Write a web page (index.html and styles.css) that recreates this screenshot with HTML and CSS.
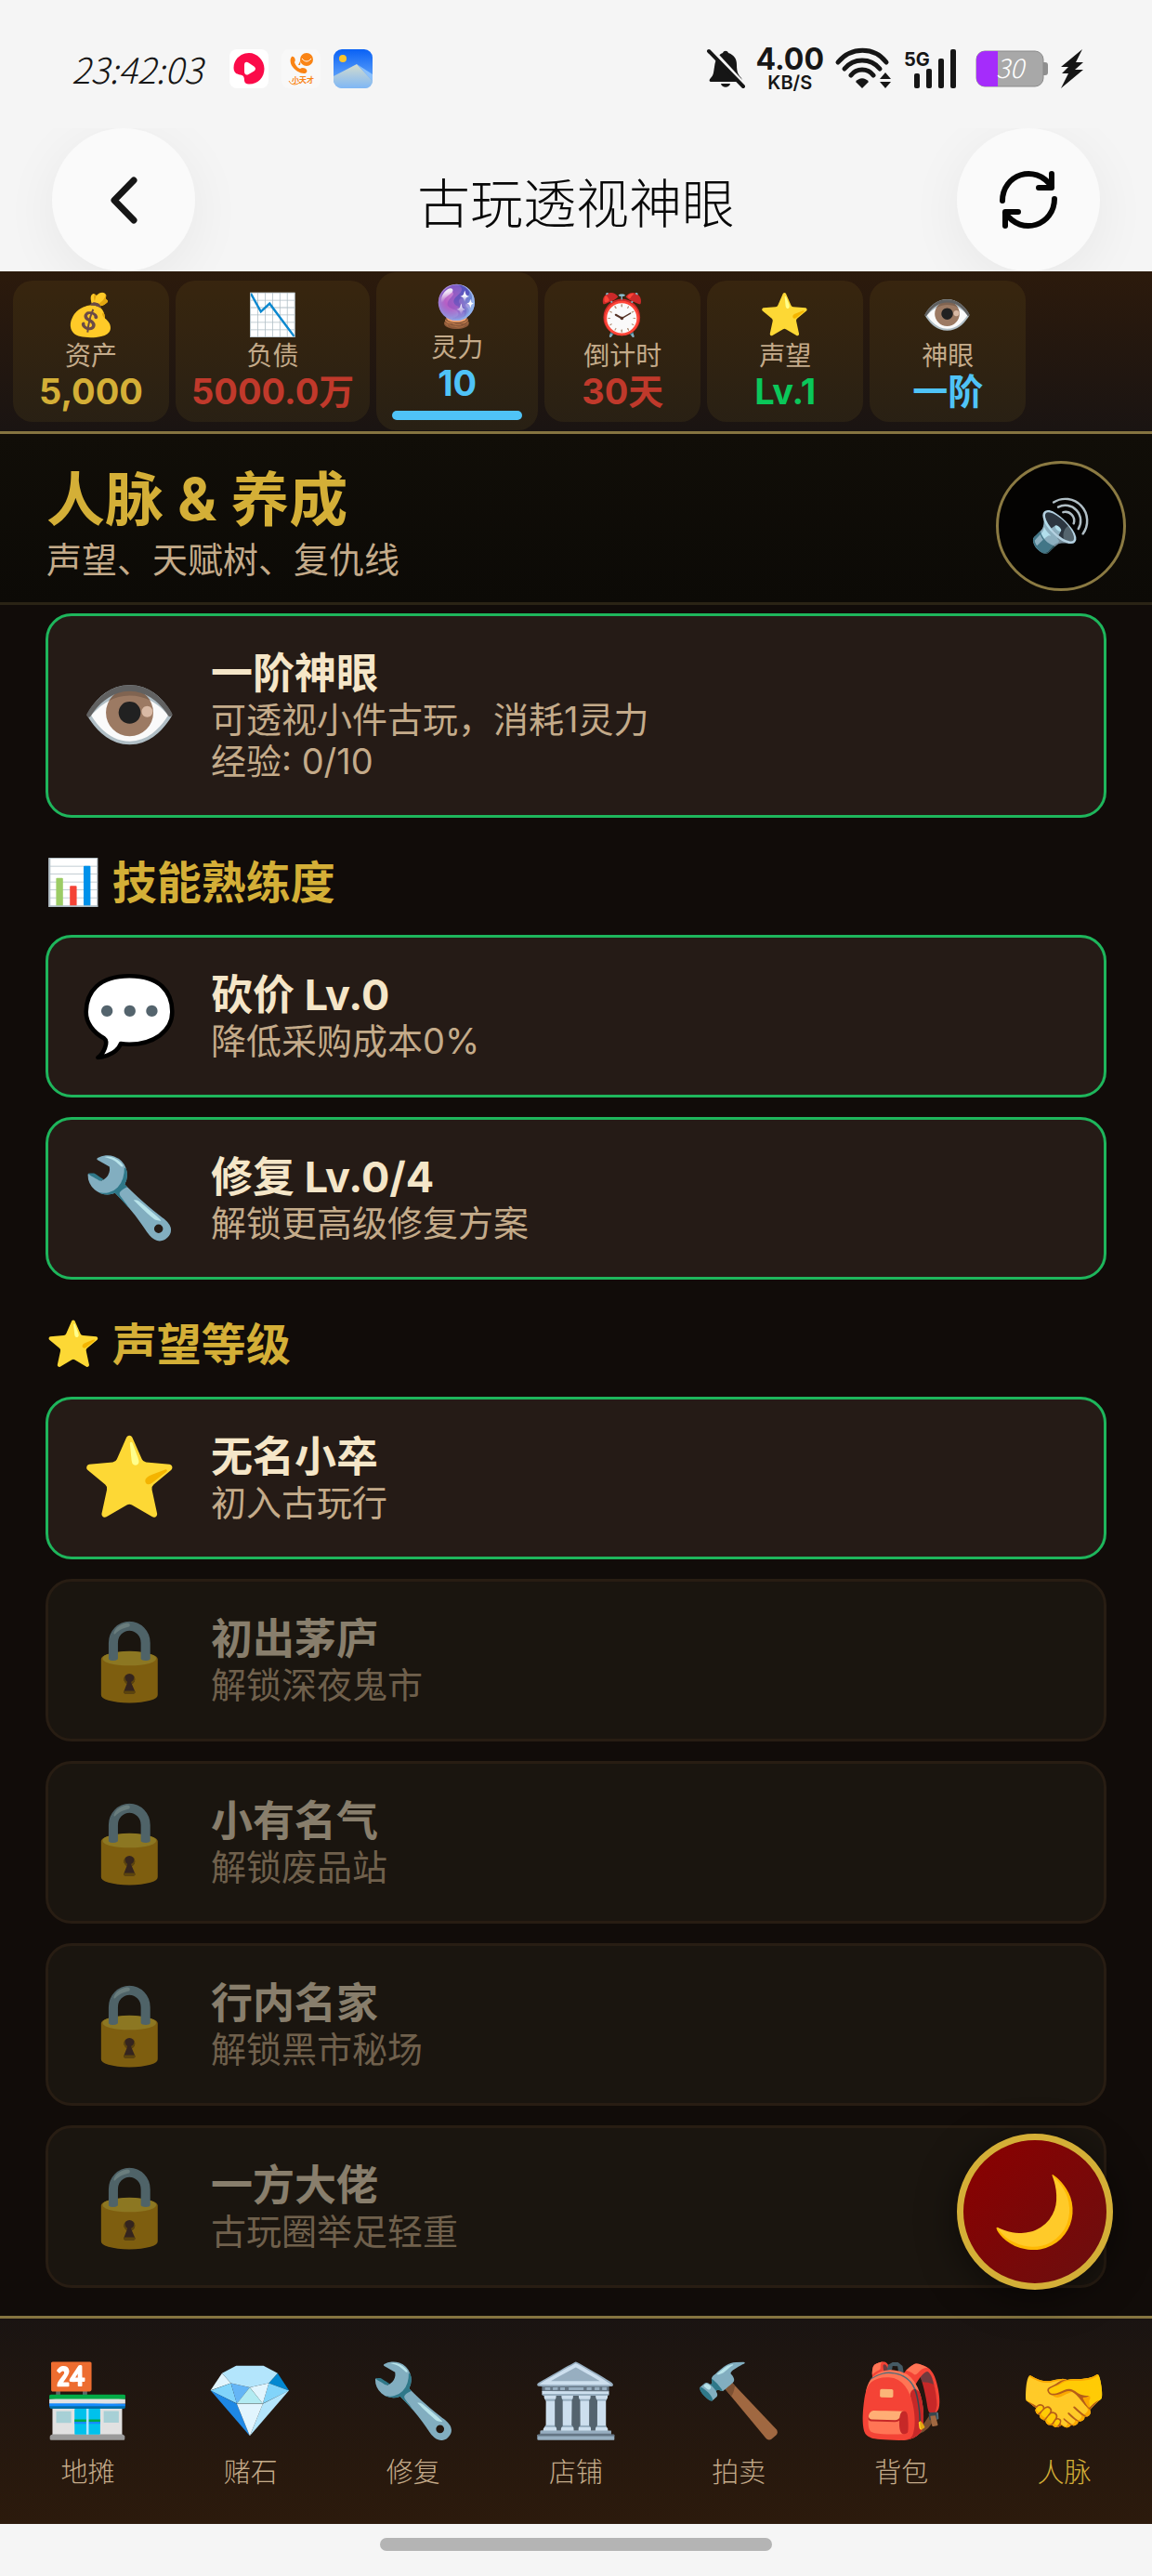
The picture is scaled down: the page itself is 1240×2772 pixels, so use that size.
FILE: index.html
```html
<!DOCTYPE html>
<html lang="zh-CN">
<head>
<meta charset="utf-8">
<meta name="viewport" content="width=device-width, initial-scale=1">
<title>古玩透视神眼</title>
<link rel="stylesheet" href="styles.css">
</head>
<body>
<div class="app">
  <div class="status">
    <div class="status-side">
      <time class="clock">23:42:03</time>
      <svg class="app-icon" viewBox="0 0 42 42"><rect width="42" height="42" rx="8" fill="#fff"/><path d="M21 4C12 4 4.500 11 4.500 20c0 5 3 7 7 7.500 4 .5 4.500 3 4.500 6 0 2.500 2 4 5 4C31 37.500 37.500 30 37.500 21S30 4 21 4z" fill="#fb0b49"/><path d="M16 17c0-3 2-4 4.500-2.500l6 4c2 1.500 2 3.500 0 5l-6 3.500c-2.500 1.500-4.500 0-4.500-3z" fill="#fff"/></svg>
      <svg class="app-icon" viewBox="0 0 42 42"><rect width="42" height="42" rx="8" fill="#f8f8f8"/><circle cx="27" cy="11" r="7" fill="#fa8415"/><path d="M20 17l-2 0 3-6z" fill="#fa8415"/><path d="M22 10c3 4 7 4 10 0" fill="none" stroke="#fff" stroke-width="1"/><path d="M11 8c-2 2-2 7 1 11s8 7 12 7c3 0 4-2 3-4s-5-3-7-1c-3-1-5-4-6-7 2-2 0-7-3-6z" fill="#fa8415"/><text x="11" y="36" class="tiny-label">小天才</text><path d="M8 34c2 5 9 5 12 1" fill="none" stroke="#fa8415" stroke-width="1"/></svg>
      <svg class="app-icon" viewBox="0 0 42 42"><defs><linearGradient id="sky" x2="0" y2="1"><stop stop-color="#0961f5"/><stop offset="1" stop-color="#7db9fb"/></linearGradient><linearGradient id="hill" x2="0" y2="1"><stop stop-color="#d4dccd"/><stop offset="1" stop-color="#7fb7f5"/></linearGradient></defs><rect width="42" height="42" rx="9" fill="url(#sky)"/><path d="M0 29L25 16l17 18v0a8 8 0 0 1-8 8H9a9 9 0 0 1-9-9z" fill="url(#hill)"/><path d="M25 16l17 18v-7z" fill="#8bc0fb"/><circle cx="10" cy="10" r="4" fill="#fbc52c"/></svg>
    </div>
    <div class="status-side">
      <svg class="bell" viewBox="0 0 41 42"><path d="M5 35c-3 0-3-2-1-4 3-3 3-6 4-12C9 10 12 6 17 4c1-3 5-3 6 0 6 2 9 6 9 13 0 8 2 11 5 14 1 2 1 4-1 4z" fill="#161616"/><path d="M15 37h10c-1 5-9 5-10 0z" fill="#161616"/><path d="M5 0l36 39" stroke="#f5f5f5" stroke-width="4"/><path d="M2 2l37 38" stroke="#161616" stroke-width="4" stroke-linecap="round"/></svg>
      <div class="rate"><span class="rate-num">4.00</span><span class="rate-unit">KB/S</span></div>
      <svg class="wifi" viewBox="0 0 60 44"><g fill="none" stroke="#161616" stroke-width="5" stroke-linecap="round"><path d="M3 15C17-2 42-2 55 15"/><path d="M10 22c10-12 28-12 38 0"/><path d="M17 29c6-8 18-8 24 0"/></g><path d="M22 36c4-5 10-5 14 0l-7 7z" fill="#161616"/><path d="M54 26l6 7H48zM54 43l6-7H48z" fill="#161616"/></svg>
      <svg class="signal" viewBox="0 0 57 44"><text x="0" y="19" class="net-label">5G</text><g fill="#161616"><rect x="11" y="27" width="6" height="16" rx="2"/><rect x="24" y="22" width="6" height="21" rx="2"/><rect x="37" y="11" width="6" height="32" rx="2"/><rect x="50" y="1" width="6" height="42" rx="2"/></g></svg>
      <svg class="battery" viewBox="0 0 78 40"><path d="M73 13h2q3 0 3 3v8q0 3-3 3h-2z" fill="#8f8f8f"/><rect x="1" y="1" width="72" height="38" rx="9" fill="#a8a8a8" stroke="#8a8a8a"/><path d="M24 1H10a9 9 0 0 0-9 9v20a9 9 0 0 0 9 9h14z" fill="#a52cfb"/><text x="37" y="30" class="battery-label">30</text></svg>
      <svg class="bolt" viewBox="0 0 24 42"><path d="M23 0L0 19h8L1 26h7L0 42l24-20h-9l9-8h-8z" fill="#161616"/></svg>
    </div>
  </div>
  <header class="topbar">
    <button class="round-btn" aria-label="返回"><svg viewBox="0 0 154 154"><path d="M88 56L67 77.500 88 99" fill="none" stroke="#161616" stroke-width="7" stroke-linecap="round" stroke-linejoin="round"/></svg></button>
    <h1>古玩透视神眼</h1>
    <button class="round-btn" aria-label="刷新"><svg viewBox="0 0 154 154"><g fill="none" stroke="#050505" stroke-width="6" stroke-linecap="round" stroke-linejoin="round"><path d="M49 78C49 50 84 37 102 63M102 49v15H88"/><path d="M105 76C105 104 70 117 52 91M52 105V90h14"/></g></svg></button>
  </header>

  <section class="stats">
    <div class="stat"><span class="emoji">💰</span><span class="label">资产</span><strong class="gold">5,000</strong></div>
    <div class="stat"><span class="emoji">📉</span><span class="label">负债</span><strong class="red">5000.0万</strong></div>
    <div class="stat"><span class="emoji">🔮</span><span class="label">灵力</span><strong class="blue">10</strong><span class="meter"></span></div>
    <div class="stat"><span class="emoji">⏰</span><span class="label">倒计时</span><strong class="red">30天</strong></div>
    <div class="stat"><span class="emoji">⭐</span><span class="label">声望</span><strong class="green">Lv.1</strong></div>
    <div class="stat"><span class="emoji">👁️</span><span class="label">神眼</span><strong class="blue">一阶</strong></div>
  </section>

  <div class="page-head">
    <div>
      <h2>人脉 &amp; 养成</h2>
      <p>声望、天赋树、复仇线</p>
    </div>
    <button class="sound" aria-label="声音"><span class="emoji">🔊</span></button>
  </div>

  <main class="content">
    <article class="card active"><span class="emoji">👁️</span><div><h4>一阶神眼</h4><p>可透视小件古玩，消耗1灵力</p><p>经验: 0/10</p></div></article>

    <h3><span class="emoji">📊</span>技能熟练度</h3>
    <div class="cards">
      <article class="card active"><span class="emoji">💬</span><div><h4>砍价 Lv.0</h4><p>降低采购成本0%</p></div></article>
      <article class="card active"><span class="emoji">🔧</span><div><h4>修复 Lv.0/4</h4><p>解锁更高级修复方案</p></div></article>
    </div>

    <h3><span class="emoji">⭐</span>声望等级</h3>
    <div class="cards">
      <article class="card active"><span class="emoji">⭐</span><div><h4>无名小卒</h4><p>初入古玩行</p></div></article>
      <article class="card locked"><span class="emoji">🔒</span><div><h4>初出茅庐</h4><p>解锁深夜鬼市</p></div></article>
      <article class="card locked"><span class="emoji">🔒</span><div><h4>小有名气</h4><p>解锁废品站</p></div></article>
      <article class="card locked"><span class="emoji">🔒</span><div><h4>行内名家</h4><p>解锁黑市秘场</p></div></article>
      <article class="card locked"><span class="emoji">🔒</span><div><h4>一方大佬</h4><p>古玩圈举足轻重</p></div></article>
    </div>
    <button class="fab" aria-label="夜晚"><span class="emoji">🌙</span></button>
  </main>

  <nav class="tabs">
    <a href="#stall"><span class="emoji">🏪</span>地摊</a>
    <a href="#stone"><span class="emoji">💎</span>赌石</a>
    <a href="#repair"><span class="emoji">🔧</span>修复</a>
    <a href="#shop"><span class="emoji">🏛️</span>店铺</a>
    <a href="#auction"><span class="emoji">🔨</span>拍卖</a>
    <a href="#bag"><span class="emoji">🎒</span>背包</a>
    <a href="#people" class="current"><span class="emoji">🤝</span>人脉</a>
  </nav>
  <div class="gesture"><span></span></div>
</div>
</body>
</html>
```
FILE: styles.css
```css
* { box-sizing: border-box; margin: 0; padding: 0; }

body {
  background: #f5f5f5;
  font-family: Inter, "Noto Sans CJK SC", sans-serif;
  color: #c4ab8a;
}

button { font: inherit; border: 0; cursor: pointer; }
svg { display: block; overflow: visible; }

.app { display: flex; flex-direction: column; min-height: 100vh; }

.emoji {
  font-family: "Noto Color Emoji", sans-serif;
  font-weight: 400;
  line-height: 1;
  white-space: nowrap;
}

/* system status bar */
.status {
  display: flex;
  justify-content: space-between;
  align-items: center;
  height: 138px;
  padding: 10px 74px 0 77px;
}
.status-side { display: flex; align-items: center; gap: 14px; }
.clock {
  width: 156px;
  font-family: "Noto Sans CJK SC", sans-serif;
  font-weight: 300;
  font-style: italic;
  font-size: 38px;
  line-height: 48px;
  color: #161616;
}
.app-icon { width: 42px; height: 42px; }
.tiny-label { font-size: 8px; font-weight: 700; fill: #fa8415; }
.bell { width: 41px; height: 42px; }
.rate {
  display: flex;
  flex-direction: column;
  align-items: center;
  margin: 0 -2px;
  color: #161616;
  font-weight: 700;
}
.rate-num { font-size: 32px; line-height: 30px; }
.rate-unit { font-size: 20px; line-height: 20px; font-weight: 600; }
.wifi { width: 60px; height: 44px; }
.signal { width: 57px; height: 44px; margin-right: 6px; }
.net-label { font-size: 20px; font-weight: 700; fill: #161616; }
.battery { width: 78px; height: 40px; }
.battery-label {
  font-family: "Noto Sans CJK SC", sans-serif;
  font-size: 28px;
  font-style: italic;
  font-weight: 300;
  text-anchor: middle;
  fill: #fff;
}
.bolt { width: 24px; height: 42px; }

/* title bar */
.topbar {
  display: flex;
  justify-content: space-between;
  align-items: center;
  height: 154px;
  padding: 0 56px;
  overflow: hidden;
}
.topbar h1 {
  font-family: "Noto Sans CJK SC", sans-serif;
  font-size: 57px;
  font-weight: 300;
  color: #080808;
}
.round-btn {
  width: 154px;
  height: 154px;
  border-radius: 50%;
  background: #fafafa;
  box-shadow: 0 12px 60px rgba(0, 0, 0, .06);
}

/* resources */
.stats {
  display: flex;
  align-items: center;
  gap: 7px;
  height: 175px;
  padding: 0 14px;
  border-bottom: 3px solid #857440;
  background: linear-gradient(#2c1a0c, #1a1412);
}
.stat {
  display: flex;
  flex-direction: column;
  align-items: center;
  justify-content: center;
  min-width: 168px;
  padding: 11px 17px;
  border-radius: 21px;
  background: rgba(212, 175, 55, .08);
}
.stat .emoji { font-size: 44px; line-height: 53px; }
.stat .label { font-size: 28px; line-height: 34px; }
.stat strong { font-size: 38px; line-height: 43px; }
.meter { width: 140px; height: 10px; margin-top: 8px; border-radius: 5px; background: #4fc3f7; }
.gold { color: #d4af37; }
.red { color: #c0392b; }
.blue { color: #4fc3f7; }
.green { color: #0ac75a; }

/* page heading */
.page-head {
  display: flex;
  justify-content: space-between;
  align-items: center;
  height: 184px;
  padding: 16px 28px 0 50px;
  border-bottom: 3px solid #2a2415;
  background: linear-gradient(#110e08, #0c0a06);
}
.page-head h2 { font-size: 63px; line-height: 72px; font-weight: 700; color: #d4af37; }
.page-head p { font-size: 38px; line-height: 58px; }
.sound {
  width: 140px;
  height: 140px;
  border: 3px solid #8b7a42;
  border-radius: 50%;
  background: #040302;
}
.sound .emoji { font-size: 54px; }

/* list */
.content {
  position: relative;
  flex: 1;
  padding: 9px 49px 29px;
  background: #110c09;
}
.content h3 {
  display: flex;
  align-items: center;
  gap: 12px;
  margin: 42px 0 28px;
  font-size: 48px;
  line-height: 56px;
  color: #d4af37;
}
.cards { display: flex; flex-direction: column; gap: 21px; }
.card {
  display: flex;
  align-items: center;
  gap: 35px;
  padding: 35px;
  border: 3px solid #2d2114;
  border-radius: 28px;
  background: #251b16;
}
.card.active { border-color: #1eb65c; }
.card > .emoji { width: 105px; font-size: 84px; text-align: center; }
.card h4 { font-size: 45px; line-height: 54px; color: #f5e6c8; }
.card p { font-size: 38px; line-height: 45px; }
.card.locked { background: #1a150f; border-color: #281d13; }
.card.locked > * { opacity: .5; }

.fab {
  position: absolute;
  right: 42px;
  bottom: 28px;
  width: 168px;
  height: 168px;
  border: 7px solid #d4af37;
  border-radius: 50%;
  background: linear-gradient(135deg, #8b0000, #6b0f0f);
  box-shadow: 0 8px 40px rgba(0, 0, 0, .5);
}
.fab .emoji { font-size: 75px; }

/* bottom tabs */
.tabs {
  display: flex;
  height: 224px;
  padding: 6px 7px 0;
  border-top: 3px solid #857440;
  background: linear-gradient(#1a1412, #2c1a0c);
}
.tabs a {
  flex: 1;
  display: flex;
  flex-direction: column;
  align-items: center;
  justify-content: center;
  gap: 14px;
  font-size: 29px;
  line-height: 36px;
  font-weight: 300;
  color: #c4ab8a;
  text-decoration: none;
}
.tabs .current { color: #d4af37; }
.tabs .emoji { font-size: 77px; line-height: 90px; }

.gesture { display: flex; justify-content: center; height: 56px; padding-top: 15px; }
.gesture span { width: 34%; height: 14px; border-radius: 7px; background: #b4b4b4; }
```
